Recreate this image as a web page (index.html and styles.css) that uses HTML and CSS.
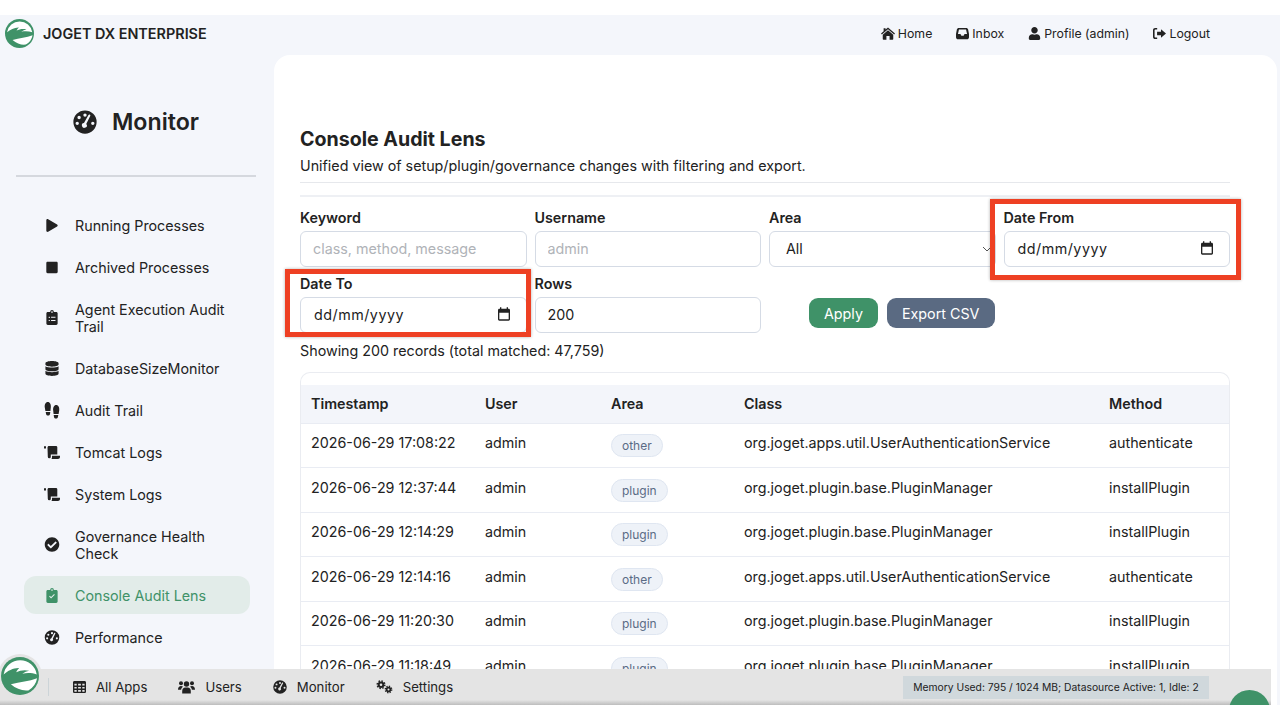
FILE: index.html
```html
<!DOCTYPE html>
<html lang="en-GB">

<head>
    <meta charset="UTF-8">
    <meta name="viewport" content="width=device-width, initial-scale=1.0">
    <title>Console Audit Lens - Joget DX Enterprise</title>
    <link rel="stylesheet" href="styles.css">
</head>

<body>
    <svg class="defs" aria-hidden="true">
        <symbol id="i-logo" viewBox="0 0 100 100">
            <circle cx="50" cy="50" r="50" fill="#3f9268"/>
            <path d="M7 46A44 44 0 0 1 94 46C82 42 70 41 56 44C62 40 68 37 74 36C62 33 50 35 40 40C42 36 44 32 48 29C34 28 18 36 7 46Z" fill="#fff"/>
            <path d="M26 72C50 66 74 64 95 56A46 46 0 0 1 72 88C56 90 40 84 26 72Z" fill="#fff"/>
        </symbol>
        <symbol id="i-gauge" viewBox="0 0 512 512">
            <path fill-rule="evenodd" d="M256 8a248 248 0 1 0 0 496a248 248 0 1 0 0-496zM256 72a36 36 0 1 0 0 72a36 36 0 1 0 0-72zM130 124a36 36 0 1 0 0 72a36 36 0 1 0 0-72zM90 248a36 36 0 1 0 0 72a36 36 0 1 0 0-72zM422 248a36 36 0 1 0 0 72a36 36 0 1 0 0-72zM370 120L282 296a52 52 0 1 1-48-18L330 104a22 22 0 0 1 40 16z"/>
        </symbol>
        <symbol id="i-home" viewBox="0 0 16 14">
            <path d="M8 0L16 7L15 8.200L8 2.200L1 8.200L0 7L3 4.400V1H5.200V2.500Z"/>
            <path d="M8 3.400L14 8.500V13.200A.8.800 0 0 1 13.200 14H9.800V9.800H6.200V14H2.800A.8.800 0 0 1 2 13.200V8.500Z"/>
        </symbol>
        <symbol id="i-inbox" viewBox="0 0 14 13">
            <path fill-rule="evenodd" d="M3 .5H11C12 .5 12.700 1.100 13 2L14 7V10.500C14 11.800 13 12.800 11.800 12.800H2.200C1 12.800 0 11.800 0 10.500V7L1 2C1.300 1.100 2 .5 3 .5ZM3.200 2.300L2.100 7H4.800L5.800 8.800H8.200L9.200 7H11.900L10.800 2.300Z"/>
        </symbol>
        <symbol id="i-user" viewBox="0 0 448 512">
            <path d="M224 256c70.700 0 128-57.300 128-128S294.700 0 224 0 96 57.300 96 128s57.300 128 128 128zm89.600 32h-16.700c-22.200 10.200-46.900 16-72.900 16s-50.600-5.800-72.900-16h-16.700C60.200 288 0 348.200 0 422.400V464c0 26.500 21.500 48 48 48h352c26.500 0 48-21.500 48-48v-41.600c0-74.200-60.200-134.400-134.400-134.400z"/>
        </symbol>
        <symbol id="i-logout" viewBox="0 0 14 12">
            <path d="M4.500 0V1.600H2.500C2 1.600 1.700 1.900 1.700 2.400V9.600C1.700 10.100 2 10.400 2.500 10.400H4.500V12H2.300C1 12 0 11 0 9.700V2.300C0 1 1 0 2.300 0Z"/>
            <path d="M8.600 1.400L14 6L8.600 10.600V7.800H4.400V4.200H8.600Z"/>
        </symbol>
        <symbol id="i-play" viewBox="0 0 448 512">
            <path d="M424.400 214.700L72.400 6.600C43.800-10.300 0 6.100 0 47.900V464c0 37.500 40.700 60.100 72.400 41.300l352-208c31.400-18.500 31.500-64.100 0-82.600z"/>
        </symbol>
        <symbol id="i-stop" viewBox="0 0 448 512">
            <path d="M400 32H48C21.500 32 0 53.500 0 80v352c0 26.500 21.500 48 48 48h352c26.500 0 48-21.500 48-48V80c0-26.500-21.500-48-48-48z"/>
        </symbol>
        <symbol id="i-clip-list" viewBox="0 0 12 16">
            <path fill-rule="evenodd" d="M4 2A2 2 0 0 1 8 2H10.500C11.300 2 12 2.700 12 3.500V14.500C12 15.300 11.300 16 10.500 16H1.500C.7 16 0 15.300 0 14.500V3.500C0 2.700 .7 2 1.500 2ZM6 1.200A.9.900 0 1 0 6 3A.9.900 0 1 0 6 1.200ZM2.500 7.200V8.400H3.700V7.200ZM5 7.300V8.300H9.700V7.300ZM2.500 10.600V11.800H3.700V10.600ZM5 10.700V11.700H9.700V10.700Z"/>
        </symbol>
        <symbol id="i-clip-check" viewBox="0 0 12 16">
            <path fill-rule="evenodd" d="M4 2A2 2 0 0 1 8 2H10.500C11.300 2 12 2.700 12 3.500V14.500C12 15.300 11.300 16 10.500 16H1.500C.7 16 0 15.300 0 14.500V3.500C0 2.700 .7 2 1.500 2ZM6 1.200A.9.900 0 1 0 6 3A.9.900 0 1 0 6 1.200ZM9 7.200L8.200 6.400L5 9.600L3.700 8.300L2.900 9.100L5 11.300Z"/>
        </symbol>
        <symbol id="i-database" viewBox="0 0 448 512">
            <path d="M448 73.143v45.714C448 159.143 347.667 192 224 192S0 159.143 0 118.857V73.143C0 32.857 100.333 0 224 0s224 32.857 224 73.143zM448 176v102.857C448 319.143 347.667 352 224 352S0 319.143 0 278.857V176c48.125 33.143 136.208 48.572 224 48.572S399.874 209.143 448 176zm0 160v102.857C448 479.143 347.667 512 224 512S0 479.143 0 438.857V336c48.125 33.143 136.208 48.572 224 48.572S399.874 369.143 448 336z"/>
        </symbol>
        <symbol id="i-shoes" viewBox="0 0 16 17">
            <path d="M3.800 0C6 0 7.200 2.500 6.800 5.500L6.400 9H1.400L.8 5.500C.3 2.500 1.600 0 3.800 0Z"/>
            <path d="M1.700 10H6.300L6 12C5.700 14 2.400 14 2.100 12Z"/>
            <path d="M12.200 3C10 3 8.800 5.500 9.200 8.500L9.600 12H14.600L15.200 8.500C15.700 5.500 14.400 3 12.200 3Z"/>
            <path d="M14.300 13H9.700L10 15C10.300 17 13.600 17 13.900 15Z"/>
        </symbol>
        <symbol id="i-scroll" viewBox="0 0 16 13">
            <path d="M0 1A1 1 0 0 1 2 1V2.500H0Z"/>
            <path d="M3.500 1.500C3.500 .6 4.100 0 5 0H12C12.800 0 13.300 .6 13.300 1.300V8.600H6.800V10.800A1.500 1.500 0 0 1 3.800 10.800Z"/>
            <path d="M8 9.800H16V11C16 12.200 15 13 14 13H7.400C7.800 12.500 8 12 8 11.400Z"/>
        </symbol>
        <symbol id="i-check" viewBox="0 0 512 512">
            <path d="M504 256c0 136.967-111.033 248-248 248S8 392.967 8 256 119.033 8 256 8s248 111.033 248 248zM227.314 387.314l184-184c6.248-6.248 6.248-16.379 0-22.627l-22.627-22.627c-6.248-6.249-16.379-6.249-22.628 0L216 308.118l-70.059-70.059c-6.248-6.248-16.379-6.248-22.628 0l-22.627 22.627c-6.248 6.248-6.248 16.379 0 22.627l104 104c6.249 6.249 16.379 6.249 22.628.001z"/>
        </symbol>
        <symbol id="i-grid" viewBox="0 0 14 13">
            <path fill-rule="evenodd" d="M1.500 0H12.500C13.300 0 14 .7 14 1.500V11.500C14 12.300 13.300 13 12.500 13H1.500C.7 13 0 12.300 0 11.500V1.500C0 .7 .7 0 1.500 0ZM1.500 3V5H4V3ZM5.500 3V5H8.500V3ZM10 3V5H12.500V3ZM1.500 6.500V8.200H4V6.500ZM5.500 6.500V8.200H8.500V6.500ZM10 6.500V8.200H12.500V6.500ZM1.500 9.700V11.500H4V9.700ZM5.500 9.700V11.500H8.500V9.700ZM10 9.700V11.500H12.500V9.700Z"/>
        </symbol>
        <symbol id="i-users" viewBox="0 0 17 13">
            <circle cx="8.500" cy="3.500" r="2.700"/>
            <circle cx="3" cy="2.700" r="2"/>
            <circle cx="14" cy="2.700" r="2"/>
            <path d="M4.200 13V10.500C4.200 8.500 5.500 7 7.300 7H9.700C11.500 7 12.800 8.500 12.800 10.500V13Z"/>
            <path d="M0 9.200C0 6.800 1.300 5.500 3 5.500C3.800 5.500 4.500 5.800 5 6.300C4 7 3.300 8 3.100 9.200Z"/>
            <path d="M17 9.200C17 6.800 15.700 5.500 14 5.500C13.200 5.500 12.500 5.800 12 6.300C13 7 13.700 8 13.900 9.200Z"/>
        </symbol>
        <symbol id="i-cogs" viewBox="0 0 17 14">
            <g fill="none" stroke="#222">
                <circle cx="5" cy="4.700" r="2.300" stroke-width="2"/>
                <circle cx="5" cy="4.700" r="3.800" stroke-width="1.500" stroke-dasharray="1.500 1.480"/>
                <circle cx="12.500" cy="9.500" r="1.900" stroke-width="1.800"/>
                <circle cx="12.500" cy="9.500" r="3.200" stroke-width="1.400" stroke-dasharray="1.300 1.210"/>
            </g>
        </symbol>
        <symbol id="i-calendar" viewBox="0 0 24 24">
            <path d="M19 4h-1V2h-2v2H8V2H6v2H5c-1.100 0-2 .9-2 2v14c0 1.100.9 2 2 2h14c1.100 0 2-.9 2-2V6c0-1.100-.9-2-2-2zm0 16H5V10h14v10z"/>
        </symbol>
    </svg>

    <div class="screen">
        <header class="topbar">
            <div class="brand">
                <span class="brand-logo"><svg><use href="#i-logo"/></svg></span>
                <span class="brand-name">JOGET DX ENTERPRISE</span>
            </div>
            <nav class="topnav">
                <a href="#"><svg class="home"><use href="#i-home"/></svg>Home</a>
                <a href="#"><svg><use href="#i-inbox"/></svg>Inbox</a>
                <a href="#"><svg><use href="#i-user"/></svg>Profile (admin)</a>
                <a href="#"><svg><use href="#i-logout"/></svg>Logout</a>
            </nav>
        </header>

        <div class="layout">
            <aside class="sidebar">
                <div class="side-title">
                    <svg><use href="#i-gauge"/></svg>
                    <span>Monitor</span>
                </div>
                <ul class="side-menu">
                    <li><svg class="small"><use href="#i-play"/></svg><span>Running Processes</span></li>
                    <li><svg class="small"><use href="#i-stop"/></svg><span>Archived Processes</span></li>
                    <li><svg><use href="#i-clip-list"/></svg><span>Agent Execution Audit Trail</span></li>
                    <li><svg><use href="#i-database"/></svg><span>DatabaseSizeMonitor</span></li>
                    <li><svg class="tall"><use href="#i-shoes"/></svg><span>Audit Trail</span></li>
                    <li><svg><use href="#i-scroll"/></svg><span>Tomcat Logs</span></li>
                    <li><svg><use href="#i-scroll"/></svg><span>System Logs</span></li>
                    <li><svg><use href="#i-check"/></svg><span>Governance Health Check</span></li>
                    <li class="active"><svg><use href="#i-clip-check"/></svg><span>Console Audit Lens</span></li>
                    <li><svg><use href="#i-gauge"/></svg><span>Performance</span></li>
                </ul>
            </aside>

            <main class="content">
                <h1>Console Audit Lens</h1>
                <p class="subtitle">Unified view of setup/plugin/governance changes with filtering and export.</p>

                <form class="filters">
                    <div class="field">
                        <label>Keyword</label>
                        <input type="text" placeholder="class, method, message">
                    </div>
                    <div class="field">
                        <label>Username</label>
                        <input type="text" placeholder="admin">
                    </div>
                    <div class="field">
                        <label>Area</label>
                        <select><option>All</option></select>
                    </div>
                    <div class="field">
                        <label>Date From</label>
                        <div class="date-input"><span>dd/mm/yyyy</span><svg><use href="#i-calendar"/></svg></div>
                    </div>
                    <div class="field">
                        <label>Date To</label>
                        <div class="date-input"><span>dd/mm/yyyy</span><svg><use href="#i-calendar"/></svg></div>
                    </div>
                    <div class="field">
                        <label>Rows</label>
                        <input type="text" value="200">
                    </div>
                    <div class="actions">
                        <button type="button" class="btn-apply">Apply</button>
                        <button type="button" class="btn-export">Export CSV</button>
                    </div>
                </form>

                <p class="summary">Showing 200 records (total matched: 47,759)</p>

                <div class="table-wrap">
                    <table>
                        <thead>
                            <tr><th class="c-time">Timestamp</th><th class="c-user">User</th><th class="c-area">Area</th><th class="c-class">Class</th><th>Method</th></tr>
                        </thead>
                        <tbody>
                            <tr><td>2026-06-29 17:08:22</td><td>admin</td><td><span class="pill">other</span></td><td>org.joget.apps.util.UserAuthenticationService</td><td>authenticate</td></tr>
                            <tr><td>2026-06-29 12:37:44</td><td>admin</td><td><span class="pill">plugin</span></td><td>org.joget.plugin.base.PluginManager</td><td>installPlugin</td></tr>
                            <tr><td>2026-06-29 12:14:29</td><td>admin</td><td><span class="pill">plugin</span></td><td>org.joget.plugin.base.PluginManager</td><td>installPlugin</td></tr>
                            <tr><td>2026-06-29 12:14:16</td><td>admin</td><td><span class="pill">other</span></td><td>org.joget.apps.util.UserAuthenticationService</td><td>authenticate</td></tr>
                            <tr><td>2026-06-29 11:20:30</td><td>admin</td><td><span class="pill">plugin</span></td><td>org.joget.plugin.base.PluginManager</td><td>installPlugin</td></tr>
                            <tr><td>2026-06-29 11:18:49</td><td>admin</td><td><span class="pill">plugin</span></td><td>org.joget.plugin.base.PluginManager</td><td>installPlugin</td></tr>
                        </tbody>
                    </table>
                </div>
            </main>
        </div>

        <div class="mark mark-from"></div>
        <div class="mark mark-to"></div>

        <footer class="adminbar">
            <span class="bar-logo"><svg><use href="#i-logo"/></svg></span>
            <span class="bar-sep"></span>
            <a href="#" class="bar-apps"><svg><use href="#i-grid"/></svg>All Apps</a>
            <a href="#" class="bar-users"><svg><use href="#i-users"/></svg>Users</a>
            <a href="#" class="bar-monitor"><svg><use href="#i-gauge"/></svg>Monitor</a>
            <a href="#" class="bar-settings"><svg><use href="#i-cogs"/></svg>Settings</a>
            <span class="memory">Memory Used: 795 / 1024 MB; Datasource Active: 1, Idle: 2</span>
            <span class="fab"></span>
        </footer>
    </div>
</body>

</html>
```

FILE: styles.css
```css
* {
    box-sizing: border-box;
}

html, body {
    height: 720px;
}

body {
    margin: 0;
    font-family: Inter, 'Liberation Sans', sans-serif;
    background-color: #fff;
    color: #222;
    overflow: hidden;
}

a {
    color: inherit;
    text-decoration: none;
}

svg {
    fill: currentColor;
}

.defs {
    display: none;
}

.screen {
    position: relative;
    height: 690px;
    margin-top: 15px;
    background-color: #f4f6fb;
    overflow: hidden;
}

/* top bar */
.topbar {
    display: flex;
    justify-content: space-between;
    align-items: center;
    height: 40px;
    padding: 0 70px 4px 5px;
}

.brand {
    display: flex;
    align-items: center;
    gap: 9px;
}

.brand-logo {
    display: block;
    width: 29px;
    height: 29px;
}

.brand-logo svg {
    display: block;
    width: 100%;
    height: 100%;
}

.brand-name {
    font-size: 14.4px;
    font-weight: 600;
}

.topnav {
    display: flex;
    gap: 24px;
    font-size: 12.3px;
}

.topnav a {
    display: flex;
    align-items: center;
    gap: 3px;
}

.topnav svg {
    width: 13px;
    height: 13px;
}

.topnav svg.home {
    width: 14px;
}

/* sidebar */
.layout {
    display: flex;
    height: 650px;
}

.sidebar {
    flex: 0 0 274px;
    padding: 0 18px 0 16px;
}

.side-title {
    display: flex;
    align-items: center;
    justify-content: center;
    gap: 15px;
    height: 122px;
    padding: 14px 0 0 0;
    border-bottom: 2px solid #d5d8de;
    font-size: 23.2px;
    font-weight: 600;
}

.side-title svg {
    width: 24px;
    height: 24px;
}

.side-menu {
    list-style: none;
    margin: 29.4px 6px 0 8px;
    padding: 0;
    font-size: 14.3px;
    line-height: 17px;
}

.side-menu li {
    display: flex;
    align-items: center;
    gap: 15px;
    margin-bottom: 4px;
    padding: 10.5px 20px;
    border-radius: 12px;
}

.side-menu svg {
    flex: 0 0 16px;
    width: 16px;
    height: 15px;
}

.side-menu svg.small {
    height: 13px;
}

.side-menu svg.tall {
    height: 17px;
}

.side-menu .active {
    background-color: #e2ece9;
    color: #3f9268;
}

/* main panel */
.content {
    flex: 0 0 1003px;
    padding: 72px 47px 0 26px;
    background-color: #fff;
    border-radius: 16px 16px 0 0;
}

h1 {
    margin: 0;
    font-size: 19.6px;
    line-height: 24px;
    font-weight: 700;
}

.subtitle {
    margin: 5px 0 0;
    padding-bottom: 6px;
    font-size: 14.3px;
    line-height: 20px;
    border-bottom: 1px solid #e6e8ec;
}

.filters {
    display: grid;
    grid-template-columns: repeat(4, 1fr);
    gap: 8px;
    margin-top: 12px;
    padding-top: 12px;
    border-top: 2px solid #eef0f4;
}

.field label {
    display: block;
    margin-bottom: 5px;
    font-size: 14.3px;
    line-height: 17px;
    font-weight: 600;
}

.field input,
.field select,
.date-input {
    display: block;
    width: 100%;
    height: 36px;
    padding: 0 12px 2px;
    font-family: inherit;
    font-size: 14.3px;
    color: #222;
    background-color: #fff;
    border: 1px solid #d5dbe5;
    border-radius: 6px;
}

.field select {
    padding-left: 16px;
    appearance: none;
    background-image: url("data:image/svg+xml,%3Csvg xmlns='http://www.w3.org/2000/svg' width='10' height='6'%3E%3Cpath d='M1 1l4 4 4-4' fill='none' stroke='%23555' stroke-width='1'/%3E%3C/svg%3E");
    background-repeat: no-repeat;
    background-position: right 3px center;
}

.field input::placeholder {
    color: #b0b3b8;
}

.date-input {
    display: flex;
    align-items: center;
    justify-content: space-between;
    padding: 0 14px 2px 13px;
    letter-spacing: 0.5px;
}

.date-input svg {
    width: 16px;
    height: 16px;
}

.actions {
    display: flex;
    align-items: flex-end;
    gap: 9px;
    padding: 0 0 5px 40px;
}

.actions button {
    flex: none;
    height: 30px;
    padding: 0 15px;
    font-family: inherit;
    font-size: 14.3px;
    white-space: nowrap;
    color: #fff;
    border: none;
    border-radius: 9px;
}

.actions .btn-export {
    padding-right: 16px;
}

.btn-apply {
    background-color: #3f9268;
}

.btn-export {
    background-color: #5a6a82;
}

.summary {
    margin: 9px 0 12px;
    font-size: 14.3px;
    line-height: 18px;
}

/* table */
.table-wrap {
    padding-top: 12px;
    border: 1px solid #eaecf1;
    border-bottom: none;
    border-radius: 10px 10px 0 0;
}

table {
    width: 100%;
    table-layout: fixed;
    border-collapse: collapse;
    font-size: 14.3px;
}

th {
    height: 38px;
    padding: 0 10px;
    text-align: left;
    font-weight: 600;
    background-color: #f3f5fa;
    border-bottom: 1px solid #e9ecf3;
}

td {
    height: 44.5px;
    padding: 0 10px 5px;
    border-bottom: 1px solid #e9ecf3;
    white-space: nowrap;
}

.c-time {
    width: 174px;
}

.c-user {
    width: 126px;
}

.c-area {
    width: 133px;
}

.c-class {
    width: 365px;
}

.pill {
    display: inline-block;
    position: relative;
    top: 3px;
    height: 23px;
    padding: 0 10px;
    font-size: 12px;
    line-height: 21px;
    color: #5a6b85;
    background-color: #eef2f8;
    border: 1px solid #dfe6f1;
    border-radius: 12px;
}

/* red annotation boxes drawn over the screenshot */
.mark {
    position: absolute;
    border: 5px solid #ee4023;
    box-shadow: 0 0 3px rgba(0, 0, 0, 0.3);
}

.mark-from {
    left: 990px;
    top: 184px;
    width: 251px;
    height: 81px;
}

.mark-to {
    left: 285px;
    top: 254px;
    width: 246px;
    height: 68px;
}

/* admin bar */
.adminbar {
    position: absolute;
    left: 0;
    right: 9px;
    bottom: 0;
    display: flex;
    align-items: center;
    height: 36px;
    padding-bottom: 1px;
    font-size: 13.2px;
    background: linear-gradient(#e4e4e4 0, #e4e4e4 31px, #bdbdbd 36px);
}

.adminbar a {
    display: flex;
    align-items: center;
    gap: 10px;
}

.adminbar a svg {
    width: 14px;
    height: 14px;
}

.adminbar .bar-apps svg {
    width: 13px;
}

.bar-logo {
    position: absolute;
    left: -2px;
    top: -15px;
    width: 44px;
    height: 44px;
    padding: 3px;
    background-color: #e4e4e4;
    border-radius: 50%;
}

.bar-logo svg {
    display: block;
    width: 100%;
    height: 100%;
}

.bar-sep {
    width: 1px;
    height: 18px;
    margin-left: 48px;
    background-color: #ccd4d8;
}

.bar-apps {
    margin-left: 24px;
}

.bar-users {
    margin-left: 31px;
}

.adminbar .bar-users svg,
.adminbar .bar-settings svg {
    width: 17px;
}

.bar-monitor {
    margin-left: 31px;
}

.bar-settings {
    margin-left: 31px;
}

.memory {
    position: absolute;
    left: 903px;
    top: 7px;
    width: 306px;
    height: 23px;
    font-size: 10.3px;
    line-height: 23px;
    text-align: center;
    white-space: nowrap;
    background-color: #d0d8dc;
}

.fab {
    position: absolute;
    left: 1229px;
    top: 21px;
    width: 41px;
    height: 41px;
    background-color: #3f9268;
    border-radius: 50%;
}
```
